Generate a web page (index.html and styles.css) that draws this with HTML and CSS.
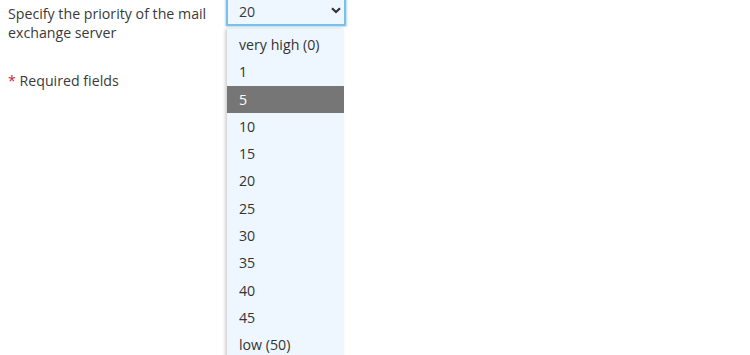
FILE: index.html
```html
<!DOCTYPE html>
<html>
<head>
<meta charset="utf-8">
<link rel="stylesheet" href="styles.css">
</head>
<body>
<div class="form">
  <div class="row">
    <div class="label">Specify the priority of the mail exchange server</div>
    <div class="field">
      <div class="select">
        <span class="value">20</span>
        <svg class="chev" width="10" height="7" viewBox="0 0 10 7"><path d="M1 1.2 L5 5 L9 1.2" fill="none" stroke="#333" stroke-width="2.2"/></svg>
      </div>
      <ul class="menu">
        <li>very high (0)</li>
        <li>1</li>
        <li class="sel">5</li>
        <li>10</li>
        <li>15</li>
        <li>20</li>
        <li>25</li>
        <li>30</li>
        <li>35</li>
        <li>40</li>
        <li>45</li>
        <li>low (50)</li>
      </ul>
    </div>
  </div>
  <div class="required"><span class="star">*</span> Required fields</div>
</div>
</body>
</html>
```
FILE: styles.css
```css
html, body {
  margin: 0;
  padding: 0;
  background: #fff;
  overflow: hidden;
}
body {
  font-family: "Open Sans", "Liberation Sans", sans-serif;
  font-size: 14.2px;
  color: #3a3a3a;
  width: 750px;
  height: 355px;
}
.form {
  padding-left: 8px;
}
.row {
  display: flex;
  align-items: flex-start;
}
.label {
  width: 218px;
  line-height: 19px;
  padding-top: 4px;
}
.field {
  position: relative;
  margin-left: 0;
}
.select {
  margin-top: -6px;
  border: 2px solid #7cc0e8;
  box-shadow: 0 0 2px 1px #b5dcf3;
  background: #eef7ff;
  display: flex;
  align-items: center;
  justify-content: space-between;
  padding: 4px 3px 0 11px;
  box-sizing: content-box;
  height: 24px;
  width: 102px;
  border-radius: 1px;
}
.value {
  line-height: 20px;
}
.chev {
  margin-top: -4px;
}
.menu {
  position: absolute;
  top: 29px;
  left: 1px;
  width: 117px;
  height: 340px;
  margin: 0;
  padding: 2px 0 0 0;
  list-style: none;
  background: #eef7ff;
  box-shadow: -2px 0 3px rgba(0, 0, 0, 0.18);
}
.menu li {
  height: 27.3px;
  line-height: 27.3px;
  padding-left: 12px;
  color: #333;
}
.menu li.sel {
  background: #767676;
  color: #fff;
}
.required {
  margin-top: 29px;
  line-height: 19px;
}
.star {
  color: #c0283c;
}
```
